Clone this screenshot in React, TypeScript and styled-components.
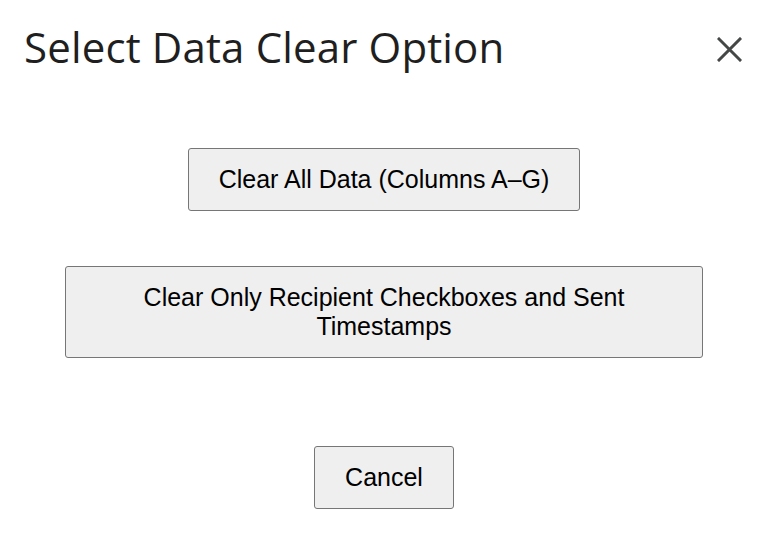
import React from "react";
import styled, { createGlobalStyle } from "styled-components";

const Global = createGlobalStyle`
  html, body { margin: 0; padding: 0; background: #ffffff; }
  body { font-family: "Liberation Sans", Arial, sans-serif; }
`;

const Dialog = styled.div`
  display: flex;
  flex-direction: column;
  width: 763px;
  min-height: 557px;
  box-sizing: border-box;
`;

const Header = styled.header`
  display: flex;
  justify-content: space-between;
  align-items: flex-start;
  padding: 22px 21px 0 24px;
`;

const Title = styled.h1`
  margin: 0;
  font-family: "Open Sans", "Noto Sans", sans-serif;
  font-weight: 400;
  font-size: 42px;
  line-height: 50px;
  color: #1f1f1f;
  letter-spacing: 0.15px;
`;

const CloseButton = styled.button`
  display: flex;
  align-items: center;
  justify-content: center;
  margin-top: 15px;
  padding: 0;
  width: 25px;
  height: 25px;
  border: none;
  background: transparent;
  color: #444746;
  cursor: pointer;
`;

const Body = styled.main`
  display: flex;
  flex-direction: column;
  align-items: center;
  padding: 0 60px 0 65px;
`;

const Row = styled.div<{ $space: number }>`
  display: flex;
  justify-content: center;
  align-self: stretch;
  margin-top: ${(p) => p.$space}px;
`;

const ActionButton = styled.button<{ $full?: boolean }>`
  font-family: "Liberation Sans", Arial, sans-serif;
  font-size: 25px;
  line-height: 29px;
  color: #000000;
  background: #efefef;
  border: 1px solid #767676;
  border-radius: 3px;
  padding: 16px 30px;
  text-align: center;
  width: ${(p) => (p.$full ? "100%" : "auto")};
  cursor: pointer;
`;

export default function App() {
  return (
    <>
      <Global />
      <Dialog>
        <Header>
          <Title>Select Data Clear Option</Title>
          <CloseButton aria-label="Close">
            <svg width="25" height="25" viewBox="0 0 25 25" fill="none">
              <path
                d="M2 2 L23 23 M23 2 L2 23"
                stroke="currentColor"
                strokeWidth="3"
                strokeLinecap="square"
              />
            </svg>
          </CloseButton>
        </Header>
        <Body>
          <Row $space={76}>
            <ActionButton>Clear All Data (Columns A–G)</ActionButton>
          </Row>
          <Row $space={55}>
            <ActionButton $full>
              Clear Only Recipient Checkboxes and Sent Timestamps
            </ActionButton>
          </Row>
          <Row $space={88}>
            <ActionButton>Cancel</ActionButton>
          </Row>
        </Body>
      </Dialog>
    </>
  );
}
